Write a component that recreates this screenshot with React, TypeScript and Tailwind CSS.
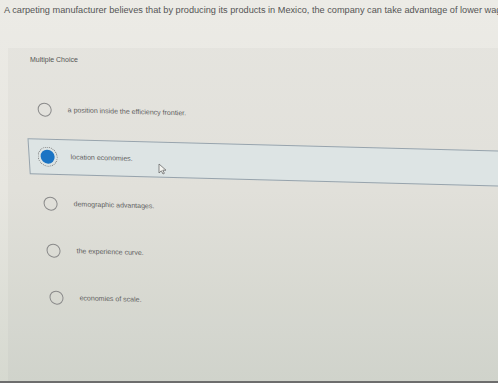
const options = [
  { id: 'a', label: 'a position inside the efficiency frontier.' },
  { id: 'b', label: 'location economies.' },
  { id: 'c', label: 'demographic advantages.' },
  { id: 'd', label: 'the experience curve.' },
  { id: 'e', label: 'economies of scale.' },
];

const selected = 'b';

const Option = ({ label, checked }: { label: string; checked: boolean }) => {
  return (
    <li
      className={
        checked
          ? 'flex h-[36px] items-center border border-[#97a3ac] bg-[#dde4e4] pl-[11px]'
          : 'flex h-[36px] items-center border border-transparent pl-[11px]'
      }
    >
      {checked ? (
        <span className="size-[14px] rounded-full bg-[#1b74c4] outline-1 outline-offset-2 outline-dotted outline-[#7a7a7a]" />
      ) : (
        <span className="size-[14px] rounded-full border border-[#8a8a8a]" />
      )}
      <span className="ml-[16px] text-[7px] leading-[10px] text-[#5e5e5e]">{label}</span>
    </li>
  );
};

export default function App() {
  return (
    <div className="relative h-[383px] w-[498px] overflow-hidden border-b-2 border-[#6d6d6d] bg-linear-to-b from-[#ecebe6] via-[#e7e6e0] to-[#d6d9d0] font-['Liberation_Sans',Arial,sans-serif]">
      <p className="overflow-hidden whitespace-nowrap pl-[4px] pt-[4px] text-[9.2px] leading-[12px] text-[#555]">
        A carpeting manufacturer believes that by producing its products in Mexico, the company can take advantage of lower wages.
      </p>
      <div className="ml-[8px] mt-[32px] h-full bg-black/[0.025] pt-[7px]">
        <p className="pl-[22px] text-[7px] leading-[10px] text-[#555]">Multiple Choice</p>
        <ul className="ml-[24px] mt-[33px] flex w-[520px] skew-x-[3.6deg] skew-y-[1.5deg] flex-col gap-[11px]">
          {options.map((o) => (
            <Option key={o.id} label={o.label} checked={o.id === selected} />
          ))}
        </ul>
      </div>
      {/* mouse pointer */}
      <svg className="absolute left-[158px] top-[163px]" width="9" height="12" viewBox="0 0 9 12">
        <path d="M1 1 L1 10 L3.3 7.8 L5 11 L6.4 10.3 L4.8 7.2 L8 7.2 Z" fill="#f4f4f0" stroke="#6a6a6a" strokeWidth="0.8" strokeLinejoin="round" />
      </svg>
    </div>
  );
}
